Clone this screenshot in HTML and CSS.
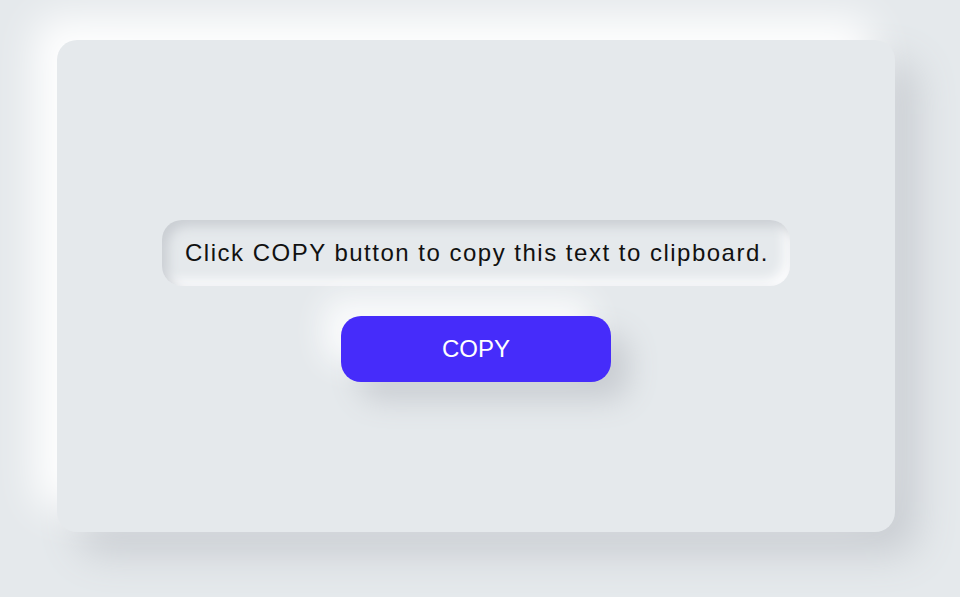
FILE: index.html
```html
<!DOCTYPE html>
<html lang="en">
<head>
<meta charset="utf-8">
<title>Copy to clipboard</title>
<link rel="stylesheet" href="styles.css">
</head>
<body>
  <main class="card">
    <div class="field">Click COPY button to copy this text to clipboard.</div>
    <button class="copy-btn" type="button">COPY</button>
  </main>
</body>
</html>
```
FILE: styles.css
```css
* { box-sizing: border-box; }
html, body { height: 100%; }
body {
  margin: 0;
  background: #e5e9ec;
  font-family: "Liberation Sans", Arial, sans-serif;
  padding: 40px 65px 65px 57px;
  display: flex;
}
.card {
  flex: 1;
  background: #e5e9ec;
  border-radius: 20px;
  box-shadow: -22px -22px 40px #ffffff, 22px 22px 40px #c9cdd2;
  display: flex;
  flex-direction: column;
  align-items: center;
  justify-content: center;
  gap: 30px;
  padding-top: 30px;
}
.field {
  width: 628px;
  height: 66px;
  border-radius: 20px;
  background: #e5e9ec;
  box-shadow: inset 6px 6px 12px #caced3, inset -6px -6px 12px #fdfdfe;
  display: flex;
  align-items: center;
  padding-left: 23px;
  font-size: 24px;
  letter-spacing: 1.5px;
  color: #111;
  white-space: nowrap;
}
.copy-btn {
  width: 270px;
  height: 66px;
  border: none;
  border-radius: 20px;
  background: #462cfa;
  color: #fff;
  font-family: "Liberation Sans", Arial, sans-serif;
  font-size: 24px;
  box-shadow: -18px -18px 30px #fafbfc, 18px 18px 30px #c9cdd2;
}
```
